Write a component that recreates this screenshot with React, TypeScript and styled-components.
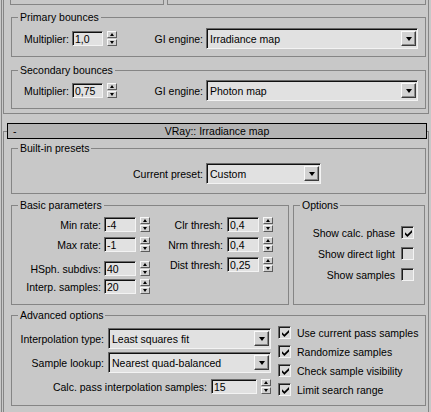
import styled, { createGlobalStyle } from "styled-components";

const ui = {
  face: "#c8c8c8",
  line: "#858585",
  bar: "#b4b4b4",
  well: "#e1e1e1",
  dark: "#6a6a6a",
  light: "#f3f3f3",
};

const GlobalStyle = createGlobalStyle`
  html, body { margin: 0; padding: 0; background: ${ui.face}; }
  body {
    font-family: "Liberation Sans", Arial, sans-serif;
    font-size: 10.5px;
    color: #000;
  }
  * { box-sizing: border-box; }
`;

const Page = styled.div`
  width: 431px;
  height: 412px;
  overflow: hidden;
  padding-left: 1px;
`;

const Panel = styled.div`
  height: 100%;
  display: flex;
  flex-direction: column;
  border-left: 1px solid ${ui.line};
  padding-left: 1px;
`;

/* the rollout above (GI), mostly scrolled out of view */
const PrevRollout = styled.div`
  width: 426px;
  height: 114px;
  flex-shrink: 0;
  border: 1px solid ${ui.line};
  border-top: none;
  padding-left: 7px;
`;

const Stubs = styled.div`
  display: flex;
  gap: 3px;
  margin-left: -1px;
`;

const Stub = styled.div<{ $w: number }>`
  width: ${(p) => p.$w}px;
  height: 5px;
  border: 1px solid ${ui.line};
  border-top: none;
`;

const Rollout = styled.div`
  width: 426px;
  margin-top: 17px;
  flex: 1;
  border: 1px solid ${ui.line};
  border-bottom: none;
`;

const TitleBar = styled.div`
  height: 16px;
  margin: -9px 1px 0 3px;
  border: 1px solid #000;
  background: ${ui.bar};
  display: grid;
  grid-template-columns: 1fr auto 1fr;
  align-items: center;
  padding: 0 5px;
  line-height: 14px;
`;

const RolloutBody = styled.div`
  padding-left: 7px;
`;

const Group = styled.fieldset<{ $w: number; $mt: number; $h?: number }>`
  width: ${(p) => p.$w}px;
  ${(p) => (p.$h ? `height: ${p.$h}px;` : "")}
  margin: ${(p) => p.$mt}px 0 0 0;
  padding: 0;
  min-width: 0;
  flex-shrink: 0;
  border: 1px solid ${ui.line};
`;

const Legend = styled.legend`
  margin-left: 6px;
  padding: 0 2px;
  height: 12px;
  line-height: 12px;
  white-space: nowrap;
`;

const Body = styled.div<{ $pt: number; $pb?: number; $flex?: boolean }>`
  padding: ${(p) => p.$pt}px 0 ${(p) => p.$pb ?? 0}px 0;
  display: ${(p) => (p.$flex ? "flex" : "block")};
`;

const Col = styled.div<{ $w?: number; $pt?: number; $ml?: number }>`
  ${(p) => (p.$w ? `width: ${p.$w}px;` : "")}
  padding-top: ${(p) => p.$pt ?? 0}px;
  margin-left: ${(p) => p.$ml ?? 0}px;
  display: flex;
  flex-direction: column;
`;

const Line = styled.div<{ $h: number; $mt?: number }>`
  display: flex;
  align-items: center;
  height: ${(p) => p.$h}px;
  margin-top: ${(p) => p.$mt ?? 0}px;
`;

const Label = styled.span<{ $w: number }>`
  width: ${(p) => p.$w}px;
  flex-shrink: 0;
  text-align: right;
  white-space: nowrap;
`;

const Field = styled.div<{ $w: number; $ml: number }>`
  width: ${(p) => p.$w}px;
  height: 15px;
  margin-left: ${(p) => p.$ml}px;
  flex-shrink: 0;
  background: ${ui.well};
  border: 1px solid;
  border-color: ${ui.dark} ${ui.light} ${ui.light} ${ui.dark};
  box-shadow: inset 1px 1px 0 #101010;
  padding-left: 2px;
  line-height: 14px;
  white-space: nowrap;
`;

const Spin = styled.div<{ $ml: number }>`
  width: 10px;
  height: 15px;
  margin-left: ${(p) => p.$ml}px;
  flex-shrink: 0;
  display: flex;
  flex-direction: column;
  gap: 1px;
`;

const SpinBtn = styled.div<{ $dir: "up" | "down" }>`
  flex: 1;
  background: #d0d0d0;
  border: 1px solid;
  border-color: #f8f8f8 #5c5c5c #5c5c5c #f8f8f8;
  display: flex;
  align-items: center;
  justify-content: center;

  &::after {
    content: "";
    border-left: 2.5px solid transparent;
    border-right: 2.5px solid transparent;
    ${(p) =>
      p.$dir === "up" ? "border-bottom: 3px solid #000;" : "border-top: 3px solid #000;"}
  }
`;

const Select = styled.div<{ $w: number; $ml: number }>`
  width: ${(p) => p.$w}px;
  height: 21px;
  margin-left: ${(p) => p.$ml}px;
  flex-shrink: 0;
  display: flex;
  align-items: center;
  background: ${ui.well};
  border: 1px solid;
  border-color: ${ui.dark} ${ui.light} ${ui.light} ${ui.dark};
  box-shadow: inset 1px 1px 0 #101010;
  padding: 0 1px 0 3px;
`;

const SelectText = styled.span`
  flex: 1;
  white-space: nowrap;
  overflow: hidden;
`;

const DropBtn = styled.div`
  width: 15px;
  height: 15px;
  flex-shrink: 0;
  background: #d2d2d2;
  border: 1px solid;
  border-color: #fafafa #3c3c3c #3c3c3c #fafafa;
  box-shadow: inset -1px -1px 0 #8a8a8a;
  display: flex;
  align-items: center;
  justify-content: center;

  &::after {
    content: "";
    border-left: 3.5px solid transparent;
    border-right: 3.5px solid transparent;
    border-top: 4px solid #000;
  }
`;

const Pair = styled.div`
  display: flex;
  gap: 4px;
  margin-top: 5px;
`;

const CheckRow = styled.div<{ $h: number; $mt?: number; $end?: boolean }>`
  display: flex;
  align-items: center;
  gap: 6px;
  height: ${(p) => p.$h}px;
  margin-top: ${(p) => p.$mt ?? 0}px;
  justify-content: ${(p) => (p.$end ? "flex-end" : "flex-start")};
  padding-right: ${(p) => (p.$end ? 10 : 0)}px;
  white-space: nowrap;
`;

const Box = styled.span`
  width: 13px;
  height: 13px;
  flex-shrink: 0;
  background: #d9d9d9;
  border: 1px solid;
  border-color: ${ui.dark} ${ui.light} ${ui.light} ${ui.dark};
  box-shadow: inset 1px 1px 0 #1c1c1c;
  display: flex;
  align-items: center;
  justify-content: center;
  padding: 1px 0 0 1px;
`;

function Spinner({ ml }: { ml: number }) {
  return (
    <Spin $ml={ml}>
      <SpinBtn $dir="up" />
      <SpinBtn $dir="down" />
    </Spin>
  );
}

function Dropdown({ w, ml, value }: { w: number; ml: number; value: string }) {
  return (
    <Select $w={w} $ml={ml}>
      <SelectText>{value}</SelectText>
      <DropBtn />
    </Select>
  );
}

function Checkbox({ checked }: { checked?: boolean }) {
  return (
    <Box>
      {checked && (
        <svg width="7" height="7" viewBox="0 0 7 7">
          <path d="M0 2.2 L2.4 4.6 L7 0 L7 2.4 L2.4 7 L0 4.6 Z" fill="#000" />
        </svg>
      )}
    </Box>
  );
}

function Bounces({ title, mt, pt, mult, engine }: { title: string; mt: number; pt: number; mult: string; engine: string }) {
  return (
    <Group $w={415} $mt={mt}>
      <Legend>{title}</Legend>
      <Body $pt={pt} $pb={7}>
        <Line $h={21}>
          <Label $w={57}>Multiplier:</Label>
          <Field $w={31} $ml={3}>{mult}</Field>
          <Spinner ml={4} />
          <Label $w={86}>GI engine:</Label>
          <Dropdown w={212} ml={3} value={engine} />
        </Line>
      </Body>
    </Group>
  );
}

const basicLeft = [
  { label: "Min rate:", value: "-4", mt: 0 },
  { label: "Max rate:", value: "-1", mt: 5 },
  { label: "HSph. subdivs:", value: "40", mt: 9 },
  { label: "Interp. samples:", value: "20", mt: 3 },
];

const basicRight = [
  { label: "Clr thresh:", value: "0,4" },
  { label: "Nrm thresh:", value: "0,4" },
  { label: "Dist thresh:", value: "0,25" },
];

const options = [
  { label: "Show calc. phase", checked: true },
  { label: "Show direct light", checked: false },
  { label: "Show samples", checked: false },
];

const advChecks = [
  "Use current pass samples",
  "Randomize samples",
  "Check sample visibility",
  "Limit search range",
];

export default function App() {
  return (
    <>
      <GlobalStyle />
      <Page>
        <Panel>
          <PrevRollout>
            <Stubs>
              <Stub $w={154} />
              <Stub $w={259} />
            </Stubs>
            <Bounces title="Primary bounces" mt={6} pt={5} mult="1,0" engine="Irradiance map" />
            <Bounces title="Secondary bounces" mt={7} pt={4} mult="0,75" engine="Photon map" />
          </PrevRollout>

          <Rollout>
            <TitleBar>
              <span>-</span>
              <span>VRay:: Irradiance map</span>
              <span />
            </TitleBar>

            <RolloutBody>
              <Group $w={415} $mt={3}>
                <Legend>Built-in presets</Legend>
                <Body $pt={9} $pb={9}>
                  <Line $h={21}>
                    <Label $w={191}>Current preset:</Label>
                    <Dropdown w={115} ml={3} value="Custom" />
                  </Line>
                </Body>
              </Group>

              <Pair>
                <Group $w={278} $mt={0} $h={106}>
                  <Legend>Basic parameters</Legend>
                  <Body $pt={6} $flex>
                    <Col $w={138}>
                      {basicLeft.map((r) => (
                        <Line key={r.label} $h={15} $mt={r.mt}>
                          <Label $w={89}>{r.label}</Label>
                          <Field $w={32} $ml={3}>{r.value}</Field>
                          <Spinner ml={4} />
                        </Line>
                      ))}
                    </Col>
                    <Col>
                      {basicRight.map((r, i) => (
                        <Line key={r.label} $h={15} $mt={i ? 5 : 0}>
                          <Label $w={73}>{r.label}</Label>
                          <Field $w={32} $ml={4}>{r.value}</Field>
                          <Spinner ml={4} />
                        </Line>
                      ))}
                    </Col>
                  </Body>
                </Group>

                <Group $w={132} $mt={0} $h={106}>
                  <Legend>Options</Legend>
                  <Body $pt={15}>
                    {options.map((o, i) => (
                      <CheckRow key={o.label} $h={13} $mt={i ? 8 : 0} $end>
                        <span>{o.label}</span>
                        <Checkbox checked={o.checked} />
                      </CheckRow>
                    ))}
                  </Body>
                </Group>
              </Pair>

              <Group $w={415} $mt={4}>
                <Legend>Advanced options</Legend>
                <Body $pt={0} $pb={6} $flex>
                  <Col $w={259} $pt={7}>
                    <Line $h={21}>
                      <Label $w={92}>Interpolation type:</Label>
                      <Dropdown w={163} ml={4} value="Least squares fit" />
                    </Line>
                    <Line $h={21} $mt={3}>
                      <Label $w={92}>Sample lookup:</Label>
                      <Dropdown w={163} ml={4} value="Nearest quad-balanced" />
                    </Line>
                    <Line $h={15} $mt={6}>
                      <Label $w={195}>Calc. pass interpolation samples:</Label>
                      <Field $w={46} $ml={4}>15</Field>
                      <Spinner ml={4} />
                    </Line>
                  </Col>
                  <Col $pt={2} $ml={7}>
                    {advChecks.map((t) => (
                      <CheckRow key={t} $h={19}>
                        <Checkbox checked />
                        <span>{t}</span>
                      </CheckRow>
                    ))}
                  </Col>
                </Body>
              </Group>

              <Group $w={415} $mt={5} $h={60}>
                <Legend>Mode</Legend>
              </Group>
            </RolloutBody>
          </Rollout>
        </Panel>
      </Page>
    </>
  );
}
